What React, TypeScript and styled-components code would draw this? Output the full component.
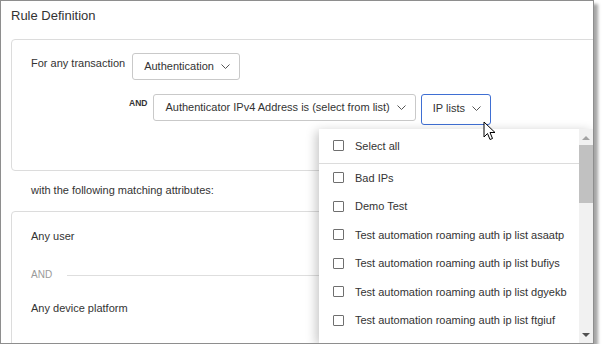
import React from 'react';
import styled, { createGlobalStyle } from 'styled-components';

const GlobalStyle = createGlobalStyle`
    html, body {
        margin: 0;
        padding: 0;
        background: #fff;
    }
    body {
        font-family: 'Liberation Sans', Arial, sans-serif;
        color: #333;
    }
`;

const Frame = styled.div`
    position: relative;
    box-sizing: border-box;
    width: 594px;
    height: 344px;
    border: 1px solid #8e8e8e;
    background: #fff;
    overflow: hidden;
    box-shadow: 4px 4px 3px rgba(0, 0, 0, 0.35);
`;

const Header = styled.div`
    box-sizing: border-box;
    height: 38px;
    padding: 7px 0 0 10px;
    font-size: 13px;
    line-height: 15px;
    color: #333;
`;

const Body = styled.div`
    padding-left: 10px;
    margin-right: -20px;
`;

const Card = styled.div<{ pad: string }>`
    border: 1px solid #dcdcdc;
    border-radius: 4px;
    padding: ${({ pad }) => pad};
`;

const Row = styled.div<{ indent?: number; top?: number }>`
    display: flex;
    align-items: flex-start;
    padding-left: ${({ indent }) => indent || 0}px;
    margin-top: ${({ top }) => top || 0}px;
`;

const Label = styled.div`
    font-size: 11px;
    line-height: 14px;
    padding-top: 3px;
    margin-right: 7px;
`;

const AndTag = styled.div`
    font-size: 8.5px;
    font-weight: bold;
    line-height: 10px;
    padding-top: 4px;
    margin-right: 6px;
    color: #333;
`;

const Select = styled.div<{ active?: boolean }>`
    box-sizing: border-box;
    display: flex;
    align-items: center;
    height: ${({ active }) => (active ? 31 : 27)}px;
    padding: 0 9px 0 11px;
    margin-right: 5px;
    border: 1px solid ${({ active }) => (active ? '#3f6fd3' : '#c9c9c9')};
    border-radius: 3px;
    font-size: 11px;
    color: #333;
    white-space: nowrap;
    padding-bottom: ${({ active }) => (active ? 4 : 2)}px;
`;

const Chevron = styled.svg`
    width: 9px;
    height: 5px;
    margin-left: 7px;
    margin-top: 2px;
`;

const Caption = styled.div`
    font-size: 11px;
    line-height: 14px;
    margin: 12px 0 14px 20px;
`;

const Item = styled.div<{ top: number }>`
    font-size: 11px;
    line-height: 14px;
    margin-top: ${({ top }) => top}px;
`;

const Separator = styled.div`
    display: flex;
    align-items: center;
    margin-top: 25px;
    font-size: 10px;
    line-height: 14px;
    color: #9a9a9a;

    &::after {
        content: '';
        flex: 1;
        height: 1px;
        margin-left: 15px;
        background: #dedede;
    }
`;

const Menu = styled.div`
    position: absolute;
    left: 318px;
    right: 0;
    top: 128px;
    bottom: 0;
    display: flex;
    background: #fff;
    box-shadow: -3px 2px 10px rgba(0, 0, 0, 0.22);
`;

const MenuList = styled.div`
    flex: 1;
    overflow: hidden;
`;

const Option = styled.div<{ head?: boolean }>`
    box-sizing: border-box;
    display: flex;
    align-items: center;
    height: ${({ head }) => (head ? 35 : 28.5)}px;
    padding-left: 14px;
    font-size: 11px;
    color: #333;
    border-bottom: ${({ head }) => (head ? '1px solid #dcdcdc' : 'none')};
    padding-bottom: ${({ head }) => (head ? 1 : 1)}px;
`;

const Box = styled.span`
    box-sizing: border-box;
    width: 11px;
    height: 11px;
    margin-right: 11px;
    border: 1px solid #6f6f6f;
    border-radius: 1px;
    flex-shrink: 0;
`;

const Scrollbar = styled.div`
    width: 14px;
    background: #f1f1f1;
    display: flex;
    flex-direction: column;
    align-items: center;
`;

const Arrow = styled.div<{ down?: boolean }>`
    width: 0;
    height: 0;
    margin: ${({ down }) => (down ? '0 0 6px' : '7px 0 5px')};
    border-left: 4px solid transparent;
    border-right: 4px solid transparent;
    ${({ down }) => (down ? 'border-top: 4px solid #505050;' : 'border-bottom: 4px solid #a3a3a3;')}
`;

const Thumb = styled.div`
    width: 14px;
    height: 58px;
    background: #c1c1c1;
`;

const Track = styled.div`
    flex: 1;
`;

const Cursor = styled.svg`
    position: absolute;
    left: 482px;
    top: 120px;
    width: 14px;
    height: 21px;
`;

const chevron = (
    <Chevron viewBox="0 0 9 5">
        <path d="M0.5 0.5 L4.5 4.5 L8.5 0.5" fill="none" stroke="#555" strokeWidth="1" />
    </Chevron>
);

const lists = [
    'Bad IPs',
    'Demo Test',
    'Test automation roaming auth ip list asaatp',
    'Test automation roaming auth ip list bufiys',
    'Test automation roaming auth ip list dgyekb',
    'Test automation roaming auth ip list ftgiuf',
];

function App() {
    return (
        <>
            <GlobalStyle />
            <Frame>
                <Header>Rule Definition</Header>
                <Body>
                    <Card pad="13px 20px 45px 19px">
                        <Row>
                            <Label>For any transaction</Label>
                            <Select>Authentication{chevron}</Select>
                        </Row>
                        <Row indent={98} top={14}>
                            <AndTag>AND</AndTag>
                            <Select>Authenticator IPv4 Address is (select from list){chevron}</Select>
                            <Select active>IP lists{chevron}</Select>
                        </Row>
                    </Card>
                    <Caption>with the following matching attributes:</Caption>
                    <Card pad="17px 0 60px 19px">
                        <Item top={0}>Any user</Item>
                        <Separator>AND</Separator>
                        <Item top={19}>Any device platform</Item>
                    </Card>
                </Body>
                <Menu>
                    <MenuList>
                        <Option head>
                            <Box />
                            Select all
                        </Option>
                        {lists.map((name) => (
                            <Option key={name}>
                                <Box />
                                {name}
                            </Option>
                        ))}
                    </MenuList>
                    <Scrollbar>
                        <Arrow />
                        <Thumb />
                        <Track />
                        <Arrow down />
                    </Scrollbar>
                </Menu>
                <Cursor viewBox="0 0 14 21">
                    <path
                        d="M1 1 L1 16 L4.5 12.5 L7 18.5 L9.5 17.5 L7 11.5 L12 11.5 Z"
                        fill="#fff"
                        stroke="#000"
                        strokeWidth="1"
                        strokeLinejoin="round"
                    />
                </Cursor>
            </Frame>
        </>
    );
}

export default App;
